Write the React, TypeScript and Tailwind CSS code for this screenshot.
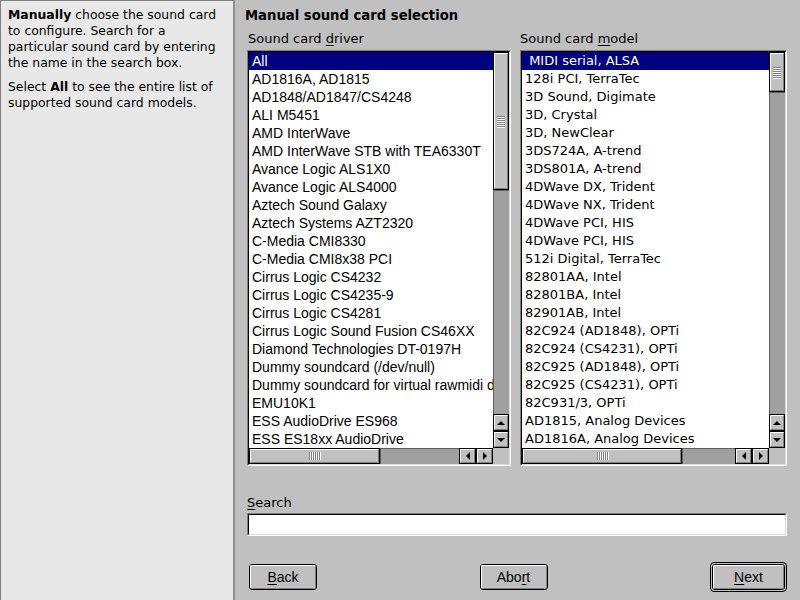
import React from 'react';

const drivers = [
  'All',
  'AD1816A, AD1815',
  'AD1848/AD1847/CS4248',
  'ALI M5451',
  'AMD InterWave',
  'AMD InterWave STB with TEA6330T',
  'Avance Logic ALS1X0',
  'Avance Logic ALS4000',
  'Aztech Sound Galaxy',
  'Aztech Systems AZT2320',
  'C-Media CMI8330',
  'C-Media CMI8x38 PCI',
  'Cirrus Logic CS4232',
  'Cirrus Logic CS4235-9',
  'Cirrus Logic CS4281',
  'Cirrus Logic Sound Fusion CS46XX',
  'Diamond Technologies DT-0197H',
  'Dummy soundcard (/dev/null)',
  'Dummy soundcard for virtual rawmidi devices',
  'EMU10K1',
  'ESS AudioDrive ES968',
  'ESS ES18xx AudioDrive',
];

const models = [
  ' MIDI serial, ALSA',
  '128i PCI, TerraTec',
  '3D Sound, Digimate',
  '3D, Crystal',
  '3D, NewClear',
  '3DS724A, A-trend',
  '3DS801A, A-trend',
  '4DWave DX, Trident',
  '4DWave NX, Trident',
  '4DWave PCI, HIS',
  '4DWave PCI, HIS',
  '512i Digital, TerraTec',
  '82801AA, Intel',
  '82801BA, Intel',
  '82901AB, Intel',
  '82C924 (AD1848), OPTi',
  '82C924 (CS4231), OPTi',
  '82C925 (AD1848), OPTi',
  '82C925 (CS4231), OPTi',
  '82C931/3, OPTi',
  'AD1815, Analog Devices',
  'AD1816A, Analog Devices',
];

// raised bevel used by scrollbar thumbs and arrow buttons
function Bevel({ className = '', children }: { className?: string; children?: React.ReactNode }) {
  return (
    <div className={`border border-black bg-[#c0c0c0] ${className}`}>
      <div className="w-full h-full border-t border-l border-white border-b border-r border-b-[#808080] border-r-[#808080] flex items-center justify-center">
        {children}
      </div>
    </div>
  );
}

function Grip({ vertical }: { vertical: boolean }) {
  if (vertical) {
    return (
      <div className="flex flex-col gap-[1px]">
        {[0, 1, 2, 3, 4, 5].map((i) => (
          <div key={i} className="w-[8px] h-[1px] bg-[#808080] shadow-[0_1px_0_#fff]" />
        ))}
      </div>
    );
  }
  return (
    <div className="flex flex-row gap-[1px]">
      {[0, 1, 2, 3, 4, 5].map((i) => (
        <div key={i} className="h-[8px] w-[1px] bg-[#808080] shadow-[1px_0_0_#fff]" />
      ))}
    </div>
  );
}

function Arrow({ dir }: { dir: 'up' | 'down' | 'left' | 'right' }) {
  const pts = {
    up: '1,6 5,2 9,6',
    down: '1,2 5,6 9,2',
    left: '6,1 2,5 6,9',
    right: '2,1 6,5 2,9',
  }[dir];
  const w = dir === 'up' || dir === 'down' ? 10 : 8;
  const h = dir === 'up' || dir === 'down' ? 8 : 10;
  return (
    <svg width={w} height={h} viewBox={`0 0 ${w} ${h}`}>
      <polygon points={pts} fill="#000" />
    </svg>
  );
}

function ListBox({
  items,
  font,
  vThumb,
  hThumb,
}: {
  items: string[];
  font: string;
  vThumb: number;
  hThumb: number;
}) {
  return (
    <div className="border-t border-l border-[#808080] border-b border-r border-b-white border-r-white">
      <div className="border-t border-l border-black border-b border-r border-b-[#dcdcdc] border-r-[#dcdcdc] grid grid-cols-[1fr_16px] grid-rows-[396px_16px]">
        <ul className={`bg-white overflow-hidden ${font}`}>
          {items.map((it, i) => (
            <li
              key={i}
              className={`h-[18px] leading-[18px] pl-[3px] whitespace-pre overflow-hidden ${
                i === 0 ? 'bg-[#000080] text-white' : 'text-black'
              }`}
            >
              {it}
            </li>
          ))}
        </ul>
        <div className="flex flex-col bg-[#a0a0a0]">
          <Bevel className="shrink-0">
            <div style={{ height: vThumb - 4 }} className="flex items-center justify-center">
              <Grip vertical />
            </div>
          </Bevel>
          <div className="flex-1 border-t border-l border-[#606060]" />
          <Bevel className="h-[17px] shrink-0">
            <Arrow dir="up" />
          </Bevel>
          <Bevel className="h-[17px] shrink-0">
            <Arrow dir="down" />
          </Bevel>
        </div>
        <div className="flex flex-row bg-[#a0a0a0]">
          <Bevel className="shrink-0">
            <div style={{ width: hThumb - 4 }} className="h-[12px] flex items-center justify-center">
              <Grip vertical={false} />
            </div>
          </Bevel>
          <div className="flex-1 border-t border-l border-[#606060]" />
          <Bevel className="w-[17px] shrink-0">
            <Arrow dir="left" />
          </Bevel>
          <Bevel className="w-[17px] shrink-0">
            <Arrow dir="right" />
          </Bevel>
        </div>
        <div className="bg-[#c0c0c0]" />
      </div>
    </div>
  );
}

function Button({ label, mn, idx, def }: { label: string; mn: string; idx: number; def?: boolean }) {
  const text = (
    <span>
      {label.slice(0, idx)}
      <span className="underline underline-offset-2">{mn}</span>
      {label.slice(idx + 1)}
    </span>
  );
  const inner = (
    <div className="h-[26px] rounded-[3px] border border-black bg-[#c0c0c0] text-[14px] text-black font-['Liberation_Sans',sans-serif]">
      <div className="w-full h-full rounded-[2px] border-t border-l border-white border-b border-r border-b-[#808080] border-r-[#808080] flex items-center justify-center">
        {text}
      </div>
    </div>
  );
  if (def) {
    return (
      <div className="w-[77px] p-[1px] rounded-[4px] border border-black bg-[#c0c0c0]">{inner}</div>
    );
  }
  return <div className="w-[68px]">{inner}</div>;
}

export default function App() {
  return (
    <div className="w-[800px] h-[600px] flex bg-[#c0c0c0] font-['DejaVu_Sans',sans-serif] text-black">
      <aside className="w-[235px] shrink-0 h-full border-t border-l border-[#808080] border-r-2 border-r-[#909090] bg-[#e8e8e8] pl-[7px] pr-[4px] pt-[6px] text-[12.4px] leading-[16px]">
        <p>
          <b>Manually</b> choose the sound card to configure. Search for a particular sound card by
          entering the name in the search box.
        </p>
        <p className="mt-[8px]">
          Select <b>All</b> to see the entire list of supported sound card models.
        </p>
      </aside>

      <main className="flex-1 flex flex-col pl-[12px] pr-[13px]">
        <h1 className="pt-[6px] -ml-[2px] text-[13.2px] leading-[20px] font-bold">
          Manual sound card selection
        </h1>
        <div className="grid grid-cols-[264px_267px] gap-x-[9px] mt-[4px]">
          <div>
            <div className="text-[13px] leading-[17px] pl-[1px] mb-[3px]">
              Sound card <span className="underline underline-offset-2">d</span>river
            </div>
            <ListBox
              items={drivers}
              font="font-['Liberation_Sans',sans-serif] text-[14px]"
              vThumb={138}
              hThumb={131}
            />
          </div>
          <div>
            <div className="text-[13px] leading-[17px] mb-[3px]">
              Sound card <span className="underline underline-offset-2">m</span>odel
            </div>
            <ListBox
              items={models}
              font="font-['DejaVu_Sans',sans-serif] text-[13px]"
              vThumb={40}
              hThumb={160}
            />
          </div>
        </div>

        <div className="mt-[28px] text-[13px] leading-[17px]">
          <span className="underline underline-offset-2">S</span>earch
        </div>
        <div className="mt-[2px] h-[23px] border-t border-l border-[#808080] border-b border-r border-b-white border-r-white">
          <div className="h-full border-t border-l border-black border-b border-r border-b-[#dcdcdc] border-r-[#dcdcdc] bg-white" />
        </div>

        <div className="mt-[26px] flex items-center justify-between pl-[2px]">
          <Button label="Back" mn="B" idx={0} />
          <Button label="Abort" mn="r" idx={3} />
          <Button label="Next" mn="N" idx={0} def />
        </div>
      </main>
    </div>
  );
}
